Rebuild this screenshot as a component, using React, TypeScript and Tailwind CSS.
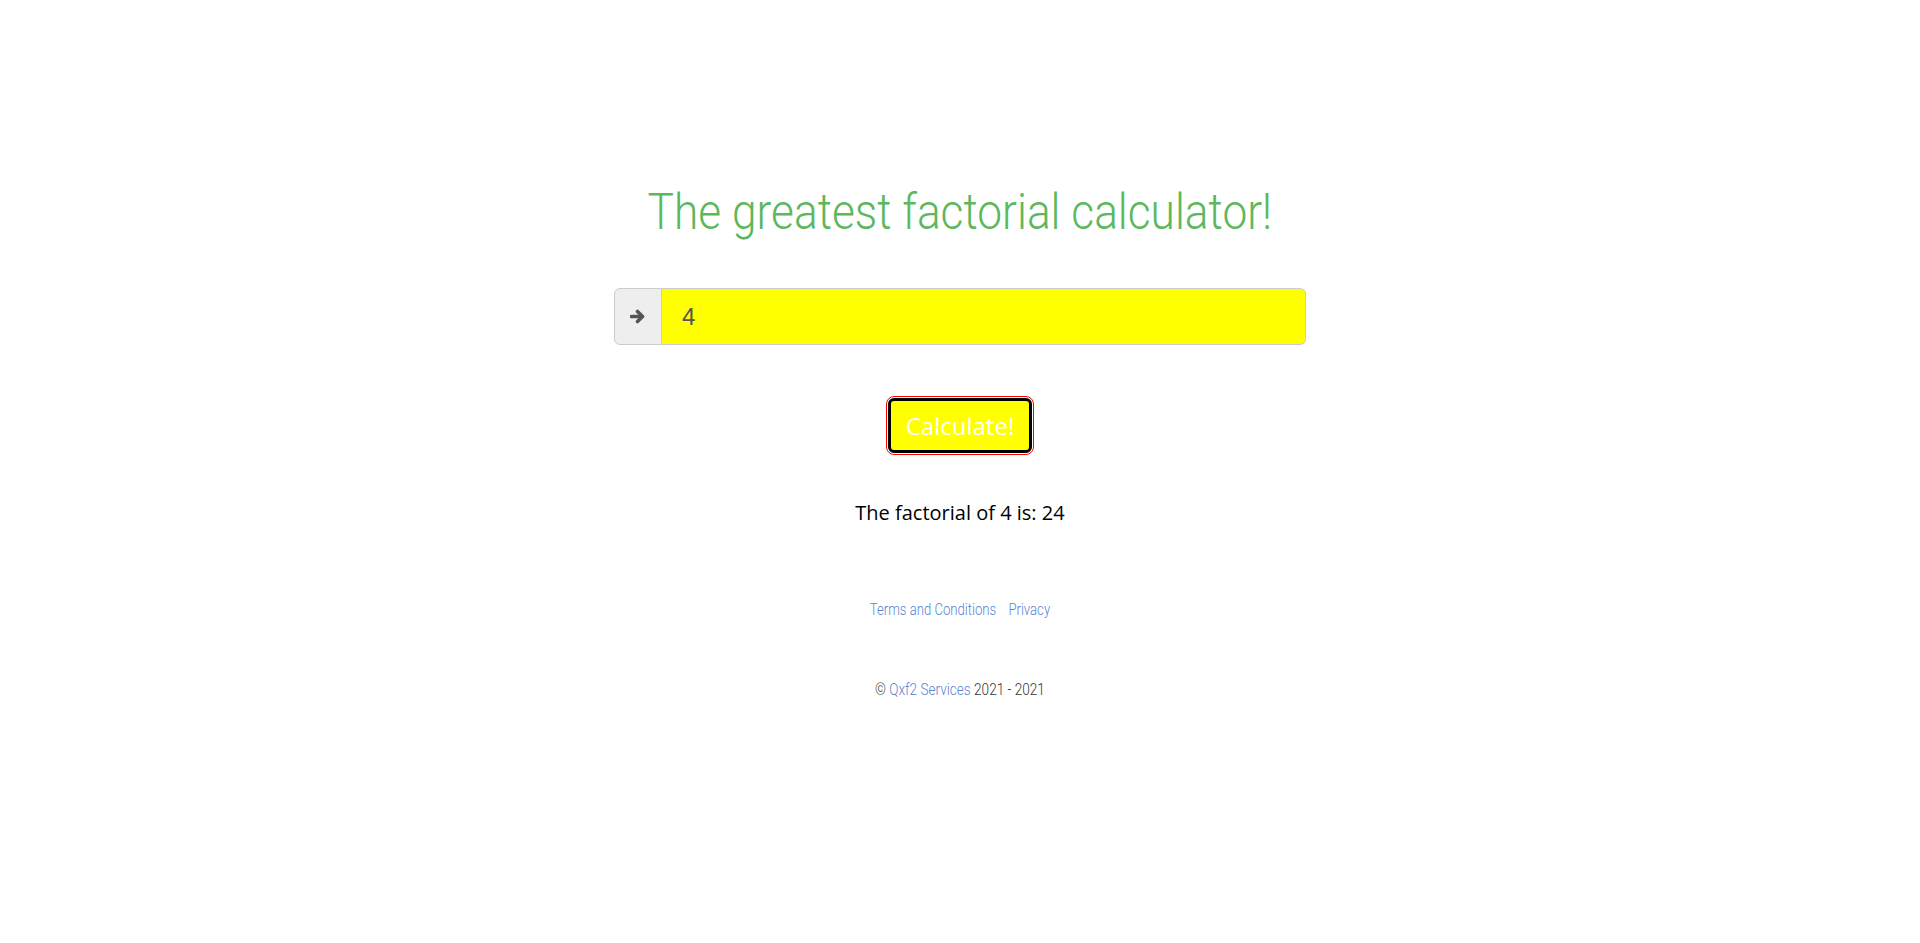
import React, { useState } from "react";

const factorial = (n: number): number => (n <= 1 ? 1 : n * factorial(n - 1));

function ArrowIcon() {
  return (
    <svg width="16" height="15" viewBox="0 0 16 15" fill="none">
      <path d="M1.5 7.5H12" stroke="#555555" strokeWidth="3.6" strokeLinecap="round" />
      <path d="M7.5 2.5L12.5 7.5L7.5 12.5" stroke="#555555" strokeWidth="3.6" strokeLinecap="round" strokeLinejoin="round" />
    </svg>
  );
}

export default function App() {
  const [value, setValue] = useState("4");
  const [result, setResult] = useState<number | null>(24);

  const calculate = () => {
    const n = parseInt(value, 10);
    if (!isNaN(n)) setResult(factorial(n));
  };

  return (
    <div className="min-h-[943px] bg-white flex flex-col items-center pt-[184px] font-['Open_Sans',sans-serif]">
      {/* condensed look of the original web font */}
      <h1 className="text-[50px] leading-[56px] text-[#5cb85c] font-['Roboto',sans-serif] font-light scale-x-[0.885] whitespace-nowrap">
        The greatest factorial calculator!
      </h1>

      <div className="mt-[48px] flex w-[692px] h-[57px]">
        <span className="w-[48px] flex items-center justify-center bg-[#eeeeee] border border-[#cccccc] rounded-l-[6px]">
          <ArrowIcon />
        </span>
        <input
          value={value}
          onChange={(e) => setValue(e.target.value)}
          className="flex-1 bg-[#ffff00] border border-l-0 border-[#cccccc] rounded-r-[6px] pl-[20px] text-[24px] text-[#555555] font-['Liberation_Sans',sans-serif] outline-none"
        />
      </div>

      <button
        onClick={calculate}
        className="mt-[53px] h-[55px] px-[15px] bg-[#ffff00] border-[3px] border-black rounded-[6px] outline outline-1 outline-offset-1 outline-[#ff0000] text-white text-[24px] leading-[31px] font-['Open_Sans',sans-serif]"
      >
        Calculate!
      </button>

      <p className="mt-[46px] text-[20px] leading-[28px] text-black">
        The factorial of {value} is: {result}
      </p>

      <div className="mt-[73px] flex gap-[15px] text-[16px] leading-[20px] text-[#5b84d0] font-['Roboto',sans-serif] font-light scale-x-[0.82] whitespace-nowrap">
        <a href="#">Terms and Conditions</a>
        <a href="#">Privacy</a>
      </div>

      <p className="mt-[60px] text-[16px] leading-[20px] text-[#333333] font-['Roboto',sans-serif] font-light scale-x-[0.85] whitespace-nowrap">
        © <a href="#" className="text-[#5b84d0]">Qxf2 Services</a> 2021 - 2021
      </p>
    </div>
  );
}
